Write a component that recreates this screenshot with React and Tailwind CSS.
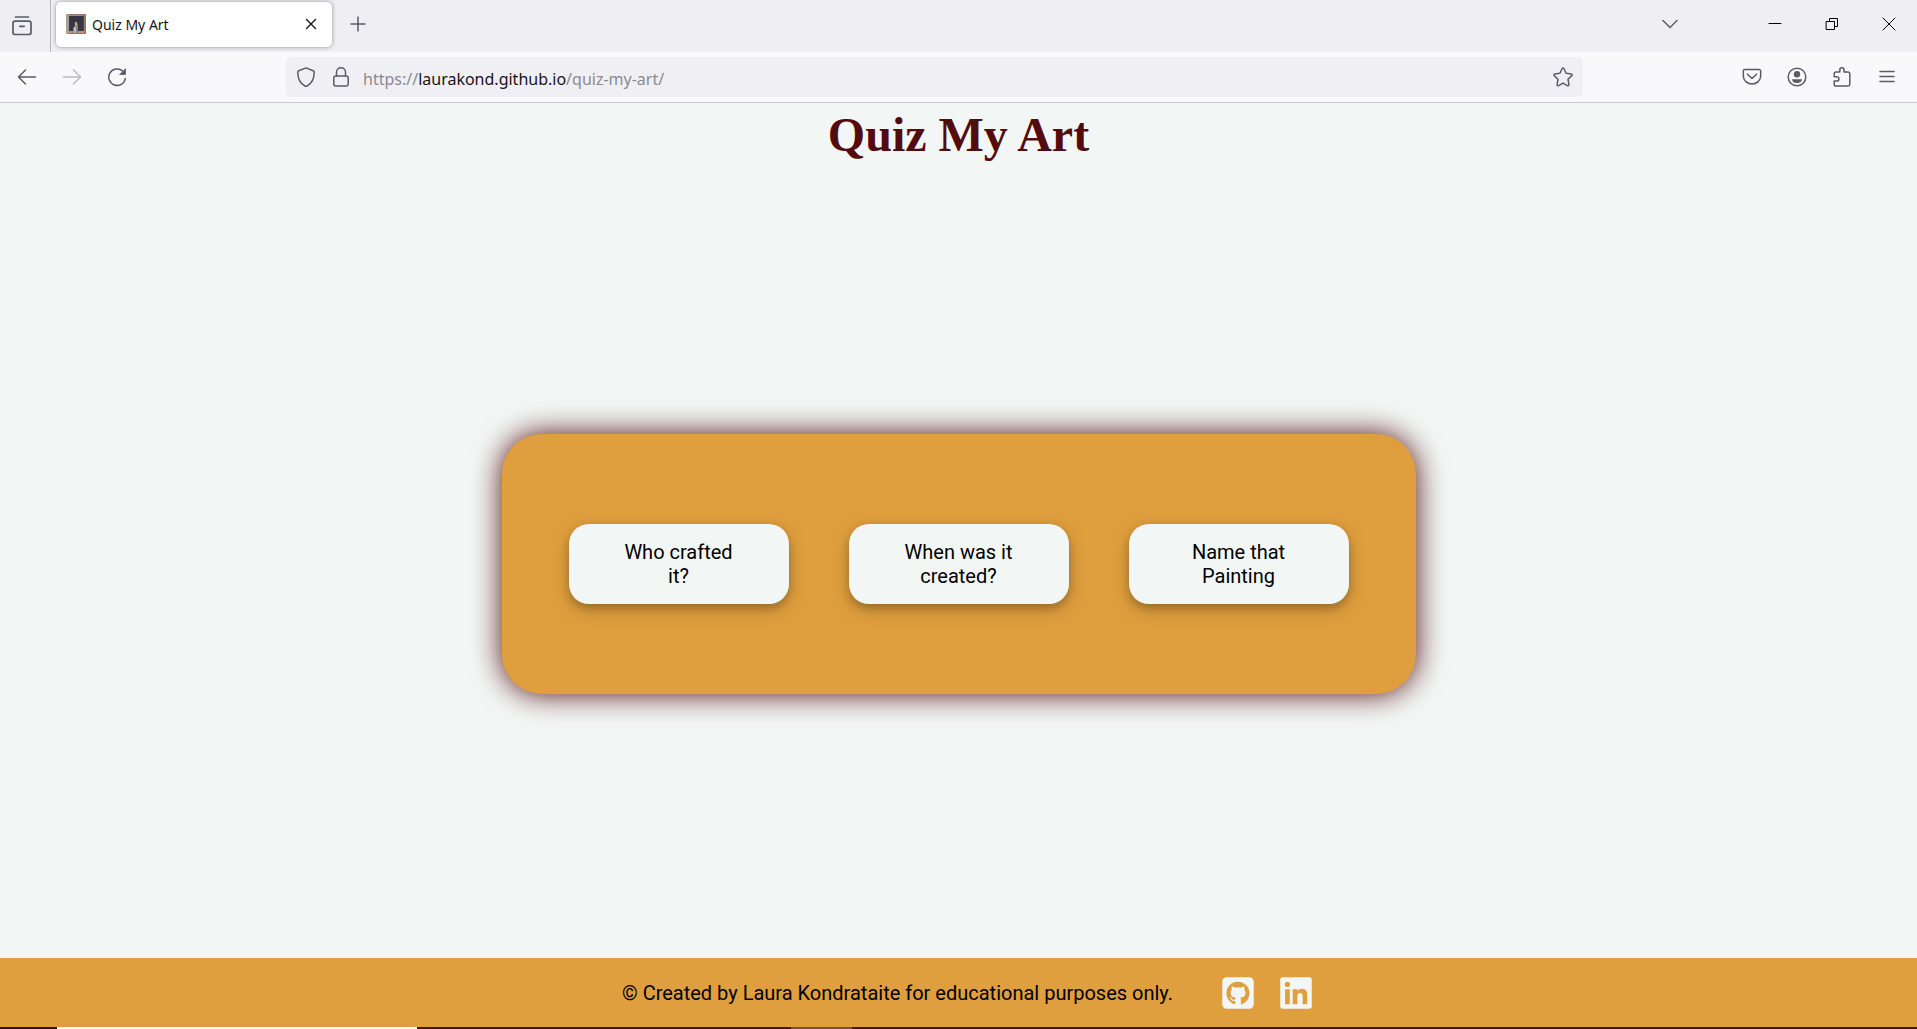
import { FaSquareGithub, FaLinkedin } from "react-icons/fa6";

function Icon({ children, className = "size-5", width = 1.5 }) {
  return (
    <svg
      viewBox="0 0 20 20"
      className={className}
      fill="none"
      stroke="currentColor"
      strokeWidth={width}
      strokeLinecap="round"
      strokeLinejoin="round"
      aria-hidden="true"
    >
      {children}
    </svg>
  );
}

function IconButton({ label, className = "text-[#5b5b66]", children }) {
  return (
    <button type="button" aria-label={label} className={`flex size-5 shrink-0 items-center justify-center ${className}`}>
      {children}
    </button>
  );
}

function Favicon() {
  return (
    <svg viewBox="0 0 20 20" className="size-5 shrink-0" aria-hidden="true">
      <rect width="20" height="20" fill="#8d7a6c" />
      <rect width="3" height="20" fill="#a99f96" />
      <rect x="3" y="2" width="14" height="15" fill="#363746" />
      <rect x="3" y="1" width="14" height="1" fill="#b58a60" />
      <path d="M3 17h5v2H3zM12 17h6v2h-6z" fill="#c5906a" />
      <path d="M9 8h2l1 4v7H7v-5l2-2z" fill="#7d828d" />
      <path d="M9 8h2v4H9z" fill="#d9a75c" />
      <path d="M8 13h2v6H8z" fill="#b9bcc2" />
      <path d="M17 2h1v15h-1z" fill="#5a463d" />
    </svg>
  );
}

function TabStrip() {
  return (
    <div className="flex h-[52px] items-center bg-[#efeef3]">
      <div className="flex h-full w-[51px] items-center border-r border-[#b5b4bb] pl-3">
        <IconButton label="View recent browsing">
          <Icon width={1.7}>
            <path d="M3.500 1H16.500M3 5.200h14a2 2 0 0 1 2 2V16.500a2 2 0 0 1-2 2H3a2 2 0 0 1-2-2V7.200a2 2 0 0 1 2-2zM7.800 10.300h4.400" />
          </Icon>
        </IconButton>
      </div>
      <div className="mb-1 ml-[5px] flex h-[45px] w-[276px] items-center rounded-[5px] bg-white pl-2.5 pr-[11px] shadow-[0_0_4px_rgba(0,0,0,0.4)]">
        <Favicon />
        <span className="ml-1.5 flex-1 pt-0.5 text-sm text-[#15141a]">Quiz My Art</span>
        <IconButton label="Close tab" className="text-[#15141a]">
          <Icon width={1.4}>
            <path d="M5.500 5.500l9 9M14.500 5.500l-9 9" />
          </Icon>
        </IconButton>
      </div>
      <div className="mb-1 ml-4">
        <IconButton label="New tab">
          <Icon>
            <path d="M10 3v14M3 10h14" />
          </Icon>
        </IconButton>
      </div>
      <div className="mb-1 ml-auto flex items-center gap-[37px] pr-[18px]">
        <div className="mr-12">
          <IconButton label="List all tabs">
            <Icon>
              <path d="M3 6.500l7 7 7-7" />
            </Icon>
          </IconButton>
        </div>
        <IconButton label="Minimize" className="text-black">
          <Icon width={1}>
            <path d="M4 9.500h12" />
          </Icon>
        </IconButton>
        <IconButton label="Restore" className="text-black">
          <Icon width={1}>
            <path d="M4.500 7.500h8v8h-8zM7.500 7.500v-3h8v8h-3" strokeLinejoin="miter" />
          </Icon>
        </IconButton>
        <IconButton label="Close" className="text-black">
          <Icon width={1}>
            <path d="M4 4l12 12M16 4L4 16" />
          </Icon>
        </IconButton>
      </div>
    </div>
  );
}

function Toolbar() {
  return (
    <div className="flex h-[51px] items-center border-b border-[#c9c9cd] bg-[#f9f9fb]">
      <div className="flex items-center gap-[25px] pl-[17px]">
        <IconButton label="Back">
          <Icon>
            <path d="M18.500 10H1.500M8.500 3l-7 7 7 7" />
          </Icon>
        </IconButton>
        <IconButton label="Forward" className="text-[#bcbbc2]">
          <Icon>
            <path d="M1.500 10h17M11.500 3l7 7-7 7" />
          </Icon>
        </IconButton>
        <IconButton label="Reload">
          <Icon>
            <path d="M18.300 11.500A8.300 8.300 0 1 1 15.500 3.900" />
            <path d="M18.500 2v5.500h-5.500z" fill="currentColor" strokeWidth="0.8" />
          </Icon>
        </IconButton>
      </div>
      <div className="ml-[159px] flex h-10 flex-1 items-center rounded-[5px] bg-[#f0f0f4] px-2.5">
        <IconButton label="Tracking protection">
          <Icon>
            <path d="M10 .9L17.200 3.700a1.500 1.500 0 0 1 1 1.500C18.200 11 15.800 16.500 11 19a2 2 0 0 1-2 0C4.200 16.500 1.800 11 1.800 5.200a1.500 1.500 0 0 1 1-1.500z" />
          </Icon>
        </IconButton>
        <div className="ml-[15px]">
          <IconButton label="Site information">
            <Icon>
              <rect x="2.800" y="9" width="14.400" height="10" rx="2" />
              <path d="M5.500 9V5.200a4.500 4.500 0 0 1 9 0V9" />
            </Icon>
          </IconButton>
        </div>
        <a href="#address" className="ml-3 flex-1 pt-1 text-base text-[#8a8a92]">
          https://<span className="text-[#15141a]">laurakond.github.io</span>/quiz-my-art/
        </a>
        <IconButton label="Bookmark this page">
          <Icon>
            <path d="M9.100 1.500a1 1 0 0 1 1.800 0l2.200 4.700 5.100.7a1 1 0 0 1 .6 1.700L15 12.200l.9 5.300a1 1 0 0 1-1.500 1.100L10 16.100l-4.400 2.500a1 1 0 0 1-1.500-1.100L5 12.200 1.200 8.600a1 1 0 0 1 .6-1.700l5.100-.7z" />
          </Icon>
        </IconButton>
      </div>
      <div className="ml-[159px] flex items-center gap-[25px] pr-5">
        <IconButton label="Save to Pocket">
          <Icon>
            <path d="M3 2.500h14a1.700 1.700 0 0 1 1.700 1.700V9a8.700 8 0 0 1-17.400 0V4.200A1.700 1.700 0 0 1 3 2.500zM5.500 7.300l4.500 4.200 4.500-4.200" />
          </Icon>
        </IconButton>
        <IconButton label="Account">
          <Icon>
            <circle cx="10" cy="10" r="8.800" />
            <circle cx="10" cy="7.200" r="3.200" fill="currentColor" stroke="none" />
            <path d="M5 12.200h10c0 2-2 3.800-5 3.800s-5-1.800-5-3.800z" fill="currentColor" stroke="none" />
          </Icon>
        </IconButton>
        <IconButton label="Extensions">
          <Icon>
            <path d="M4 19a1.800 1.800 0 0 1-1.800-1.800V14h2.600a2 2 0 0 0 0-4.200H2.200V6.800A1.800 1.800 0 0 1 4 5h3.800V2.900a2 2 0 0 1 4.200 0V5h4A1.800 1.800 0 0 1 17.800 6.800V17.200A1.800 1.800 0 0 1 16 19z" />
          </Icon>
        </IconButton>
        <IconButton label="Open application menu">
          <Icon>
            <path d="M3 4.500h14M3 9.500h14M3 14.500h14" />
          </Icon>
        </IconButton>
      </div>
    </div>
  );
}

const quizzes = ["Who crafted it?", "When was it created?", "Name that Painting"];

export default function App() {
  return (
    <div className="flex min-h-screen flex-col bg-[#f2f7f5]">
      <header className="font-['Noto_Sans',sans-serif]">
        <TabStrip />
        <Toolbar />
      </header>
      <h1 className="h-[66px] text-center font-['Liberation_Serif',serif] text-5xl leading-[64px] font-bold text-[#540b0e]">
        Quiz My Art
      </h1>
      <main className="flex flex-1 items-center justify-center">
        <div className="flex gap-[60px] rounded-[40px] bg-[#e09f3e] px-[67px] py-[90px] shadow-[0_0_30px_#540b0e]">
          {quizzes.map((quiz) => (
            <button
              key={quiz}
              type="button"
              className="h-20 w-[220px] rounded-[20px] bg-[#f2f7f5] px-12 font-['Roboto',sans-serif] text-xl leading-6 text-black shadow-[0_4px_8px_rgba(0,0,0,0.2),0_6px_20px_rgba(0,0,0,0.19)]"
            >
              {quiz}
            </button>
          ))}
        </div>
      </main>
      <footer className="flex h-[69px] items-center justify-center bg-[#e09f3e] font-['Roboto',sans-serif] text-xl text-black">
        <p className="w-[588px] text-center">© Created by Laura Kondrataite for educational purposes only.</p>
        <div className="ml-7 flex gap-[22px] text-4xl text-[#f2f7f5]">
          <a href="#github" aria-label="GitHub">
            <FaSquareGithub />
          </a>
          <a href="#linkedin" aria-label="LinkedIn">
            <FaLinkedin />
          </a>
        </div>
      </footer>
      <div className="flex h-0.5 bg-[#4a1414]">
        <div className="w-[57px] bg-[#2a1a0c]" />
        <div className="w-[360px] bg-white" />
        <div className="ml-[374px] w-[61px] bg-[#7d4a44]" />
      </div>
    </div>
  );
}
